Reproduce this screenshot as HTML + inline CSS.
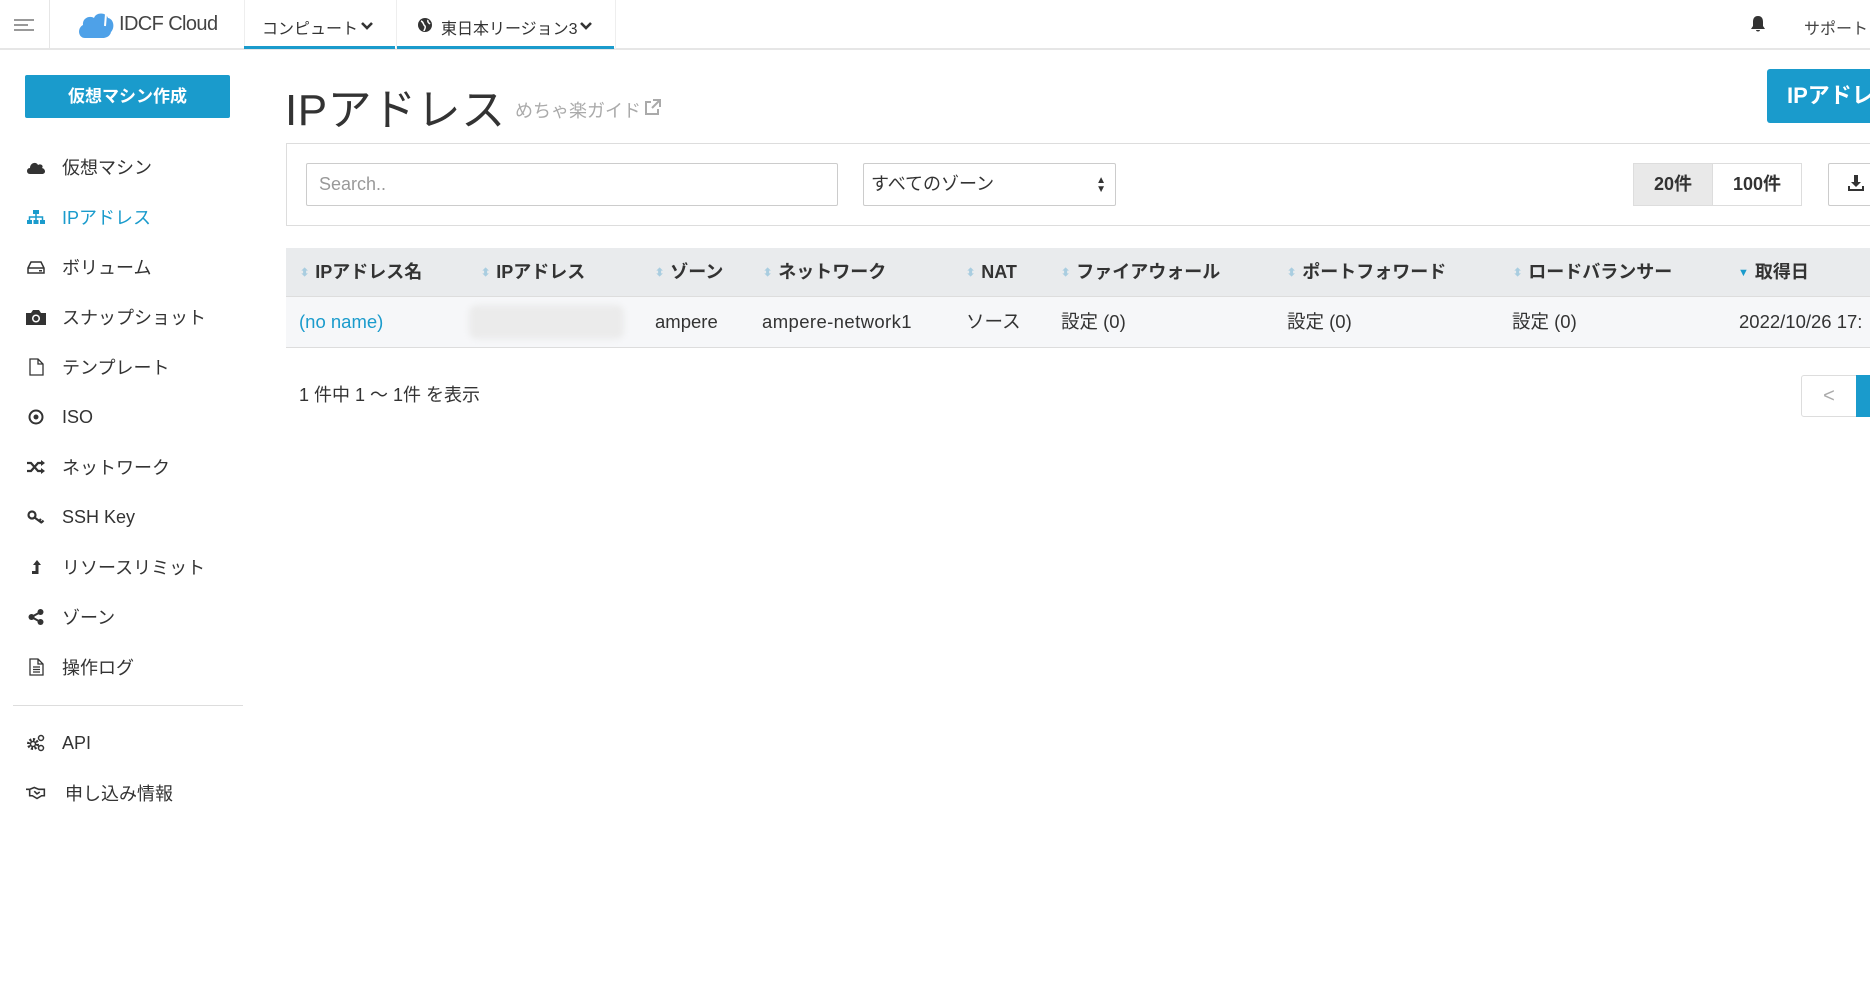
<!DOCTYPE html>
<html><head><meta charset="utf-8"><style>
*{box-sizing:border-box;margin:0;padding:0}
body{width:1870px;height:1008px;overflow:hidden;background:#fff;font-family:"Liberation Sans","Noto Sans CJK JP",sans-serif;color:#333;position:relative}
.a{position:absolute;white-space:nowrap}
.top{position:absolute;left:0;top:0;width:1870px;height:50px;border-bottom:2px solid #e6e6e6}
.nav .it{position:absolute;left:0;height:50px;width:250px;font-size:18px;color:#333;display:flex;align-items:center}
.nav .ic{position:absolute;left:25px;width:22px;height:50px;display:flex;justify-content:center;align-items:center}
.nav .tx{position:absolute;left:62px}
.hd{position:absolute;top:248px;height:49px;line-height:49px;font-size:18px;font-weight:bold;color:#333}
.hd i{font-style:normal;color:#a9cde0;font-size:11px;margin-right:6px;position:relative;top:-2px}
.cl{position:absolute;top:297px;height:50px;line-height:50px;font-size:18.5px;color:#333}
</style></head><body>
<div class="top"></div>
<div class="a" style="left:49px;top:0;width:1px;height:49px;background:#e6e6e6"></div>
<div class="a" style="left:14px;top:19px;width:20px;height:2px;background:#999"></div>
<div class="a" style="left:14px;top:24px;width:14px;height:2px;background:#999"></div>
<div class="a" style="left:14px;top:29px;width:20px;height:2px;background:#999"></div>
<svg class="a" style="left:77px;top:8px" width="38" height="32" viewBox="0 0 38 32"><path d="M8 30 C1 30 0 20 6 17 C5 10 13 7 17 10 C19 4 29 4 31 10 C37 11 38 20 34 24 C33 29 28 30 26 30 Z" fill="#4ea1e8"/><path d="M27 4 C29 1 33 2 32 6 M29 6 L28 18" stroke="#fff" stroke-width="2" fill="none"/></svg>
<div class="a" style="left:119px;top:13px;font-size:20px;color:#444;letter-spacing:-0.6px">IDCF Cloud</div>
<div class="a" style="left:244px;top:0;width:1px;height:49px;background:#eee"></div>
<div class="a" style="left:244px;top:46px;width:151px;height:3px;background:#1a9bcc"></div>
<div class="a" style="left:262px;top:15px;font-size:16px;color:#333">コンピュート</div>
<svg class="a" style="left:361px;top:22px" width="12" height="9" viewBox="0 0 12 9"><path d="M1 1 L6 6 L11 1" stroke="#333" stroke-width="2.6" fill="none"/></svg>
<div class="a" style="left:396px;top:0;width:1px;height:49px;background:#eee"></div>
<div class="a" style="left:397px;top:46px;width:217px;height:3px;background:#1a9bcc"></div>
<div class="a" style="left:615px;top:0;width:1px;height:49px;background:#eee"></div>
<svg class="a" style="left:418px;top:18px" width="14" height="14" viewBox="0 0 14 14"><circle cx="7" cy="7" r="7" fill="#333"/><path d="M3 3 C6 4 5 7 7 8 C8 10 6 12 6 13 M10 2 C9 4 11 5 12 6" stroke="#fff" stroke-width="1.5" fill="none"/></svg>
<div class="a" style="left:441px;top:15px;font-size:16px;color:#333">東日本リージョン3</div>
<svg class="a" style="left:580px;top:22px" width="12" height="9" viewBox="0 0 12 9"><path d="M1 1 L6 6 L11 1" stroke="#333" stroke-width="2.6" fill="none"/></svg>
<svg class="a" style="left:1750px;top:15px" width="16" height="18" viewBox="0 0 16 18"><path d="M8 1 C4 1 3 4 3 7 L3 11 L1 14 L15 14 L13 11 L13 7 C13 4 12 1 8 1Z M6 15 L10 15 C10 17 6 17 6 15Z" fill="#333"/></svg>
<div class="a" style="left:1804px;top:15px;font-size:16px;color:#444">サポート</div>

<div class="a" style="left:25px;top:75px;width:205px;height:43px;background:#1a9bcc;border-radius:2px;color:#fff;font-weight:bold;font-size:17px;text-align:center;line-height:43px">仮想マシン作成</div>
<div class="nav">
<div class="it" style="top:142px"><span class="ic"><svg width="20" height="14" viewBox="0 0 20 14"><path d="M4 14 C0 14 0 8 4 8 C4 3 10 1 12 5 C15 3 18 6 16 8 C20 9 20 14 16 14Z" fill="#333"/></svg></span><span class="tx">仮想マシン</span></div>
<div class="it" style="top:192px;color:#1a9bcc"><span class="ic"><svg width="18" height="14" viewBox="0 0 18 14"><rect x="6" y="0" width="6" height="4" fill="#1a9bcc"/><rect x="0" y="10" width="5" height="4" fill="#1a9bcc"/><rect x="6.5" y="10" width="5" height="4" fill="#1a9bcc"/><rect x="13" y="10" width="5" height="4" fill="#1a9bcc"/><path d="M9 4 V10 M2.5 10 V7 H15.5 V10" stroke="#1a9bcc" stroke-width="1.5" fill="none"/></svg></span><span class="tx">IPアドレス</span></div>
<div class="it" style="top:242px"><span class="ic"><svg width="18" height="13" viewBox="0 0 18 13"><path d="M1 7 L4 1 H14 L17 7 V12 H1Z M1 7 H17" stroke="#333" stroke-width="1.5" fill="none"/><rect x="12" y="9" width="3" height="1.5" fill="#333"/></svg></span><span class="tx">ボリューム</span></div>
<div class="it" style="top:292px"><span class="ic"><svg width="20" height="16" viewBox="0 0 20 16"><path d="M0 4 H5 L7 1 H13 L15 4 H20 V16 H0Z" fill="#333"/><circle cx="10" cy="9.5" r="4" fill="#fff"/><circle cx="10" cy="9.5" r="2.5" fill="#333"/></svg></span><span class="tx">スナップショット</span></div>
<div class="it" style="top:342px"><span class="ic"><svg width="15" height="18" viewBox="0 0 15 18"><path d="M1 1 H9 L14 6 V17 H1Z M9 1 V6 H14" stroke="#333" stroke-width="1.3" fill="none"/></svg></span><span class="tx">テンプレート</span></div>
<div class="it" style="top:392px"><span class="ic"><svg width="16" height="16" viewBox="0 0 16 16"><circle cx="8" cy="8" r="6.5" stroke="#333" stroke-width="2" fill="none"/><circle cx="8" cy="8" r="2.5" fill="#333"/></svg></span><span class="tx">ISO</span></div>
<div class="it" style="top:442px"><span class="ic"><svg width="18" height="14" viewBox="0 0 18 14"><path d="M0 3 H4 L11 11 H15 M0 11 H4 L11 3 H15" stroke="#333" stroke-width="2.2" fill="none"/><path d="M14 0 L18 3 L14 6Z M14 8 L18 11 L14 14Z" fill="#333"/></svg></span><span class="tx">ネットワーク</span></div>
<div class="it" style="top:492px"><span class="ic"><svg width="18" height="14" viewBox="0 0 18 14"><circle cx="5" cy="5" r="3.5" stroke="#333" stroke-width="2.2" fill="none"/><path d="M7.5 7.5 L15 13 M12 11 L14 9 M14.5 12.5 L16.5 10.5" stroke="#333" stroke-width="2.2"/></svg></span><span class="tx">SSH Key</span></div>
<div class="it" style="top:542px"><span class="ic"><svg width="12" height="16" viewBox="0 0 12 16"><path d="M7 1 L11 6 H8.5 V15 H2 V12 H5.5 V6 H3Z" fill="#333"/></svg></span><span class="tx">リソースリミット</span></div>
<div class="it" style="top:592px"><span class="ic"><svg width="16" height="16" viewBox="0 0 16 16"><circle cx="3.5" cy="8" r="3" fill="#333"/><circle cx="12.5" cy="3" r="3" fill="#333"/><circle cx="12.5" cy="13" r="3" fill="#333"/><path d="M3.5 8 L12.5 3 M3.5 8 L12.5 13" stroke="#333" stroke-width="2"/></svg></span><span class="tx">ゾーン</span></div>
<div class="it" style="top:642px"><span class="ic"><svg width="15" height="18" viewBox="0 0 15 18"><path d="M1 1 H9 L14 6 V17 H1Z M9 1 V6 H14 M4 9 H11 M4 11.5 H11 M4 14 H11" stroke="#333" stroke-width="1.3" fill="none"/></svg></span><span class="tx">操作ログ</span></div>
<div class="a" style="left:13px;top:705px;width:230px;height:1px;background:#ddd"></div>
<div class="it" style="top:718px"><span class="ic"><svg width="20" height="18" viewBox="0 0 20 18"><circle cx="7" cy="10" r="4.5" stroke="#333" stroke-width="3" stroke-dasharray="2 1.5" fill="none"/><circle cx="7" cy="10" r="2.5" stroke="#333" stroke-width="1.5" fill="none"/><circle cx="15" cy="4" r="2.5" stroke="#333" stroke-width="1.5" fill="none"/><circle cx="15" cy="14" r="2.5" stroke="#333" stroke-width="1.5" fill="none"/></svg></span><span class="tx">API</span></div>
<div class="it" style="top:768px"><span class="ic" style="left:26px"><svg width="24" height="14" viewBox="0 0 24 14"><path d="M0 3 H4 L9 1 L14 3 H20 V10 H17 L12 13 L7 10 H4 V3 M9 5 L12 8 L15 6" stroke="#333" stroke-width="1.7" fill="none"/></svg></span><span class="tx" style="left:65px">申し込み情報</span></div>
</div>

<div class="a" style="left:285px;top:74px;font-size:44px;color:#333;letter-spacing:0.5px">IPアドレス</div>
<div class="a" style="left:515px;top:97px;font-size:18px;color:#aaa">めちゃ楽ガイド</div>
<svg class="a" style="left:644px;top:99px" width="17" height="17" viewBox="0 0 17 17"><path d="M7 3 H2 V15 H14 V10 M9 1 H16 V8 M16 1 L8 9" stroke="#aaa" stroke-width="2" fill="none"/></svg>
<div class="a" style="left:1767px;top:69px;width:110px;height:54px;background:#1a9bcc;border-radius:3px 0 0 3px;color:#fff;font-weight:bold;font-size:22px;line-height:54px;padding-left:20px">IPアドレス</div>

<div class="a" style="left:286px;top:143px;width:1600px;height:83px;border:1px solid #ddd"></div>
<div class="a" style="left:306px;top:163px;width:532px;height:43px;border:1px solid #ccc;border-radius:2px;font-size:18px;color:#999;line-height:41px;padding-left:12px">Search..</div>
<div class="a" style="left:863px;top:163px;width:253px;height:43px;border:1px solid #ccc;border-radius:2px;font-size:18px;color:#333;line-height:41px;padding-left:7px">すべてのゾーン<span style="position:absolute;right:9px;top:0;font-size:10px;line-height:9px;padding-top:12px">▲<br>▼</span></div>
<div class="a" style="left:1633px;top:163px;width:80px;height:43px;background:#e9e9e9;border:1px solid #ddd;font-weight:bold;font-size:18px;text-align:center;line-height:41px">20件</div>
<div class="a" style="left:1712px;top:163px;width:90px;height:43px;border:1px solid #ddd;font-weight:bold;font-size:18px;text-align:center;line-height:41px">100件</div>
<div class="a" style="left:1828px;top:163px;width:50px;height:43px;border:1px solid #ccc;border-radius:2px"></div>
<svg class="a" style="left:1847px;top:175px" width="18" height="17" viewBox="0 0 18 17"><path d="M7 0 H11 V7 H14 L9 12 L4 7 H7Z" fill="#333"/><path d="M1 11 V16 H17 V11 H15 V14 H3 V11Z" fill="#333"/></svg>

<div class="a" style="left:286px;top:248px;width:1600px;height:49px;background:#e9ebed;border-bottom:1px solid #ddd"></div>
<div class="a" style="left:286px;top:297px;width:1600px;height:51px;background:#f6f7f9;border-bottom:1px solid #ddd"></div>
<div class="hd" style="left:300px"><i>⬍</i>IPアドレス名</div>
<div class="hd" style="left:481px"><i>⬍</i>IPアドレス</div>
<div class="hd" style="left:655px"><i>⬍</i>ゾーン</div>
<div class="hd" style="left:763px"><i>⬍</i>ネットワーク</div>
<div class="hd" style="left:966px"><i>⬍</i>NAT</div>
<div class="hd" style="left:1061px"><i>⬍</i>ファイアウォール</div>
<div class="hd" style="left:1287px"><i>⬍</i>ポートフォワード</div>
<div class="hd" style="left:1513px"><i>⬍</i>ロードバランサー</div>
<div class="hd" style="left:1738px"><i style="color:#1a9bcc">▼</i>取得日</div>
<div class="cl" style="left:299px;color:#1a9bcc">(no name)</div>
<div class="a" style="left:469px;top:305px;width:155px;height:34px;background:#ebebeb;border-radius:8px;filter:blur(3px)"></div>
<div class="cl" style="left:655px">ampere</div>
<div class="cl" style="left:762px;letter-spacing:0.4px">ampere-network1</div>
<div class="cl" style="left:966px">ソース</div>
<div class="cl" style="left:1061px">設定 (0)</div>
<div class="cl" style="left:1287px">設定 (0)</div>
<div class="cl" style="left:1512px">設定 (0)</div>
<div class="cl" style="left:1739px">2022/10/26 17:</div>

<div class="a" style="left:299px;top:381px;font-size:18px;color:#333">1 件中 1 ～ 1件 を表示</div>
<div class="a" style="left:1801px;top:375px;width:56px;height:42px;border:1px solid #ddd;border-radius:3px 0 0 3px;color:#aaa;font-size:20px;text-align:center;line-height:40px">&lt;</div>
<div class="a" style="left:1856px;top:375px;width:20px;height:42px;background:#1a9bcc"></div>
</body></html>
